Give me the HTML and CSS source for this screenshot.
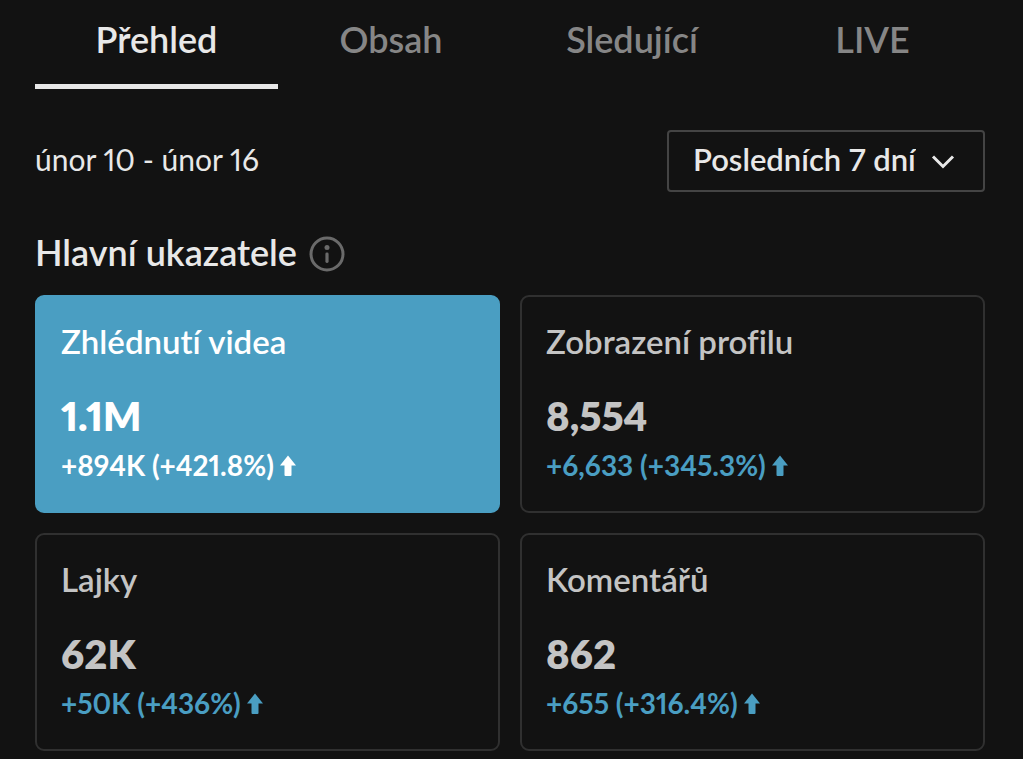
FILE: index.html
```html
<!DOCTYPE html>
<html lang="cs">

<head>
    <meta charset="utf-8">
    <meta name="viewport" content="width=device-width, initial-scale=1">
    <title>Přehled</title>
    <link rel="stylesheet" href="styles.css">
</head>

<body>
    <nav class="tabs">
        <a class="tab active" href="#prehled">Přehled</a>
        <a class="tab" href="#obsah">Obsah</a>
        <a class="tab" href="#sledujici">Sledující</a>
        <a class="tab" href="#live">LIVE</a>
    </nav>

    <main id="prehled">
        <div class="range">
            <label for="period">únor 10 - únor 16</label>
            <div class="picker">
                <select id="period">
                    <option>Posledních 7 dní</option>
                </select>
                <svg class="chevron" viewBox="0 0 24 16" aria-hidden="true">
                    <path d="M2 3.5 L12 13.5 L22 3.5" />
                </svg>
            </div>
        </div>

        <div class="heading">
            <h1>Hlavní ukazatele</h1>
            <button class="info" type="button" aria-label="Info">
                <svg viewBox="0 0 36 36">
                    <circle class="ring" cx="18" cy="18" r="16" />
                    <circle cx="18" cy="11.5" r="2.5" />
                    <rect x="16.4" y="16.5" width="3.2" height="10.5" rx="1.4" />
                </svg>
            </button>
        </div>

        <div class="cards">
            <button class="card selected" type="button">
                <span class="name">Zhlédnutí videa</span>
                <span class="value">1.1M</span>
                <span class="change">+894K (+421.8%)
                    <svg class="arrow" viewBox="0 0 16 21"><path d="M8 0.5 L16 10.5 H11.5 V20 Q11.5 21 10.5 21 H5.5 Q4.5 21 4.5 20 V10.5 H0 Z" /></svg>
                </span>
            </button>
            <button class="card" type="button">
                <span class="name">Zobrazení profilu</span>
                <span class="value">8,554</span>
                <span class="change">+6,633 (+345.3%)
                    <svg class="arrow" viewBox="0 0 16 21"><path d="M8 0.5 L16 10.5 H11.5 V20 Q11.5 21 10.5 21 H5.5 Q4.5 21 4.5 20 V10.5 H0 Z" /></svg>
                </span>
            </button>
            <button class="card" type="button">
                <span class="name">Lajky</span>
                <span class="value">62K</span>
                <span class="change">+50K (+436%)
                    <svg class="arrow" viewBox="0 0 16 21"><path d="M8 0.5 L16 10.5 H11.5 V20 Q11.5 21 10.5 21 H5.5 Q4.5 21 4.5 20 V10.5 H0 Z" /></svg>
                </span>
            </button>
            <button class="card" type="button">
                <span class="name">Komentářů</span>
                <span class="value">862</span>
                <span class="change">+655 (+316.4%)
                    <svg class="arrow" viewBox="0 0 16 21"><path d="M8 0.5 L16 10.5 H11.5 V20 Q11.5 21 10.5 21 H5.5 Q4.5 21 4.5 20 V10.5 H0 Z" /></svg>
                </span>
            </button>
        </div>
    </main>
</body>

</html>
```

FILE: styles.css
```css
* {
    box-sizing: border-box;
}

body {
    margin: 0;
    padding: 0 38px 8px 35px;
    background: #121212;
    color: #e8e8e8;
    font-family: Lato, "Liberation Sans", sans-serif;
    font-variant-numeric: proportional-nums;
    font-variant-ligatures: none;
}

.tabs {
    display: grid;
    grid-template-columns: 243fr 226fr 256fr 225fr;
}

.tab {
    height: 89px;
    padding-top: 18px;
    color: #868686;
    font-size: 36px;
    line-height: 42px;
    font-weight: 600;
    text-align: center;
    text-decoration: none;
}

.tab.active {
    color: #e8e8e8;
    border-bottom: 5px solid #e8e8e8;
}

.range {
    display: flex;
    justify-content: space-between;
    align-items: center;
    margin-top: 41px;
    font-size: 30px;
}

.range label {
    padding-bottom: 4px;
}

.picker {
    display: grid;
    align-items: center;
}

.picker select,
.chevron {
    grid-area: 1 / 1;
}

.picker select {
    appearance: none;
    height: 62px;
    padding: 0 67px 4px 24px;
    border: 2px solid #444;
    border-radius: 4px;
    background: none;
    color: #e8e8e8;
    font: inherit;
    font-size: 31px;
    font-weight: 600;
}

.chevron {
    justify-self: end;
    width: 24px;
    height: 16px;
    margin-right: 30px;
    fill: none;
    stroke: #e8e8e8;
    stroke-width: 3;
    pointer-events: none;
}

.heading {
    display: flex;
    align-items: center;
    gap: 12px;
    margin: 40px 0 19px;
}

h1 {
    margin: 0;
    padding-bottom: 4px;
    font-size: 36px;
    line-height: 40px;
    font-weight: 600;
}

.info {
    display: flex;
    padding: 0;
    border: 0;
    background: none;
}

.info svg {
    width: 36px;
    height: 36px;
    fill: #6a6a6a;
}

.info .ring {
    fill: none;
    stroke: #6a6a6a;
    stroke-width: 3;
}

.cards {
    display: grid;
    grid-template-columns: 1fr 1fr;
    gap: 20px;
}

.card {
    display: flex;
    flex-direction: column;
    align-items: flex-start;
    height: 218px;
    padding: 24px;
    border: 2px solid #303030;
    border-radius: 9px;
    background: none;
    color: #c4c4c4;
    font-family: inherit;
    font-variant-numeric: inherit;
    font-variant-ligatures: inherit;
    text-align: left;
}

.card.selected {
    border-color: #4a9ec2;
    background: #4a9ec2;
    color: #fff;
}

.name {
    font-size: 33px;
    line-height: 40px;
    font-weight: 600;
}

.value {
    margin-top: 31px;
    font-size: 40px;
    line-height: 48px;
    font-weight: 800;
}

.change {
    display: flex;
    align-items: center;
    gap: 6px;
    margin-top: 7px;
    color: #4a9ec2;
    font-size: 28px;
    line-height: 36px;
    font-weight: 700;
}

.selected .change {
    color: #fff;
}

.arrow {
    width: 16px;
    height: 21px;
    fill: currentColor;
}
```
